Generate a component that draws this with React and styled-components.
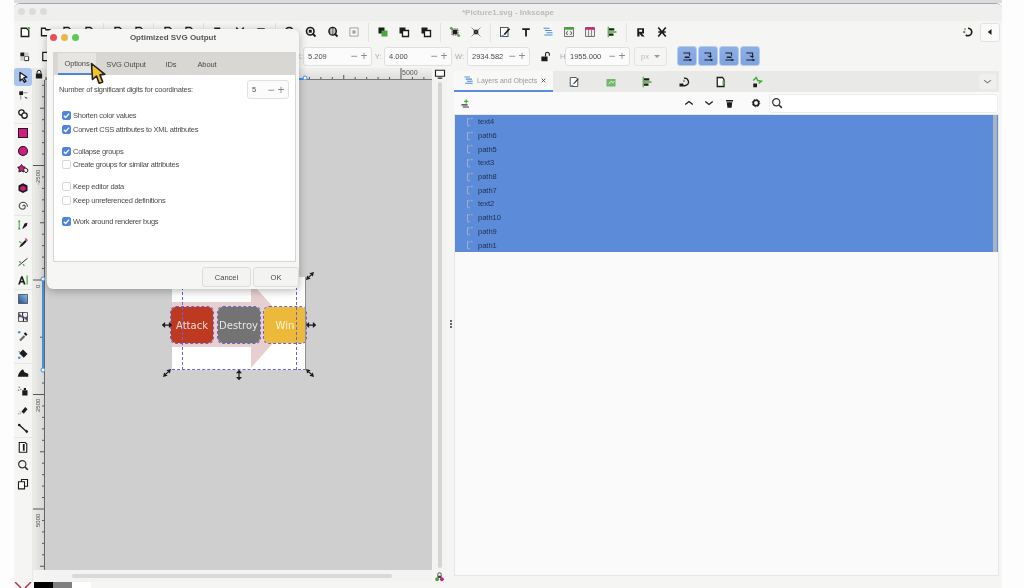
import React from 'react';
import styled, { createGlobalStyle } from 'styled-components';

const GlobalStyle = createGlobalStyle`
	html, body { margin: 0; padding: 0; background: #fdfdfd; overflow: hidden; }
	body { font-family: "Liberation Sans", Arial, sans-serif; color: #444; }
	* { box-sizing: border-box; }
`;

const K = '#1c1c1c';
const G = '#4aa83c';
const M = '#d21c80';
const B = '#4a90d9';

const ICONS = {
	doc: <path d="M4 2h6l3 3v9H4z" fill="#fff" stroke={K} strokeWidth="1.8" />,
	newdoc: <><path d="M3 3h7l3 3v8H3z" fill="#fff" stroke={K} strokeWidth="1.8" /><circle cx="13" cy="3" r="1.8" fill={G} /></>,
	folder: <path d="M2 3h5l1 2h6v8H2z" fill="#fff" stroke={K} strokeWidth="1.8" />,
	copy: <><path d="M3 2h8v9H3z" fill={K} /><path d="M6 6h8v8H6z" fill="#fff" stroke={K} strokeWidth="1.6" /></>,
	cut: <path d="M3 2l10 12M13 2L3 14" stroke={K} strokeWidth="2" />,
	paste: <><path d="M3 3h10v11H3z" fill={K} /><path d="M6 6h5v5H6z" fill="#ddd" /></>,
	zoom: <><circle cx="7" cy="7" r="5" fill="#fff" stroke={K} strokeWidth="2.2" /><path d="M10 10l4 4" stroke={K} strokeWidth="2.4" /></>,
	zoomSel: <><circle cx="7" cy="7" r="5" fill="none" stroke={K} strokeWidth="2.2" /><path d="M5 5h4v4H5z" fill={K} /><path d="M10 10l4 4" stroke={K} strokeWidth="2.4" /></>,
	zoomPage: <><circle cx="7.5" cy="7" r="5" fill="#888" stroke={K} strokeWidth="1.8" /><path d="M5.5 3v8M9.5 3v8" stroke="#fff" /><path d="M10 10l4 4" stroke={K} strokeWidth="2.4" /></>,
	fit: <><path d="M2.5 2.5h11v11h-11z" fill="none" stroke="#888" /><path d="M6 6h4v4H6z" fill="#999" /></>,
	raise: <><path d="M2 2h8v8H2z" fill={K} /><path d="M6 6h8v8H6z" fill={G} /></>,
	stack: <><path d="M2 2h8v8H2z" fill={K} /><path d="M6 6h8v8H6z" fill="#fff" stroke={K} strokeWidth="1.8" /></>,
	group: <><path d="M4 4h8v8H4z" fill="none" stroke={K} strokeWidth="1" strokeDasharray="2 1" /><path d="M5 5h6v6H5z" fill={K} /><circle cx="3" cy="3" r="1.8" fill={G} /><circle cx="13" cy="13" r="1.8" fill={G} /></>,
	ungroup: <><path d="M5 5h6v6H5z" fill={K} /><path d="M2 2l12 12M14 2L2 14" stroke="#666" /></>,
	edit: <><path d="M2 2h10v12H2z" fill="#fff" stroke="#555" strokeWidth="1.4" /><path d="M6 11l7-8 2 1-7 8z" fill={K} /><path d="M3 14l3-2" stroke={B} strokeWidth="1.6" /></>,
	text: <path d="M3 3h10v2.4H9.2V14H6.8V5.4H3z" fill={K} />,
	layers: <path d="M2 3h8M4 6h9M6 9h8M3 12h11" stroke={B} strokeWidth="1.6" fill="none" />,
	xml: <><path d="M2 2h12v12H2z" fill="#eee" stroke="#666" strokeWidth="1.2" /><path d="M2 2h12v3H2z" fill={G} /><path d="M6 7L4.5 9.5 6 12M10 7l1.5 2.5L10 12" stroke={K} fill="none" /></>,
	swatch: <><path d="M2 2h12v12H2z" fill="#eee" stroke="#666" strokeWidth="1.2" /><path d="M2 2h12v3H2z" fill={M} /><path d="M6 5v9M10 5v9" stroke="#666" /></>,
	align: <><path d="M3 1v14" stroke={G} strokeWidth="1.6" /><path d="M4 3h7v3H4zM4 10h6v3H4z" fill={K} /><path d="M4 7h10v2H4z" fill={G} /></>,
	prefs: <><path d="M3 3h9v7H9l4 4H9L6 10v4H3z" fill={K} /><path d="M5.5 5h4v2.6h-4z" fill="#fff" /></>,
	tools: <path d="M3 2l10 12M13 2L3 14M3 8h10" stroke={K} strokeWidth="2.2" />,
	spin: <><path d="M8 3a5 5 0 1 1-3 9" fill="none" stroke={K} strokeWidth="2.2" /><circle cx="3" cy="8" r="1.6" fill={G} /><circle cx="4" cy="4" r="1.2" fill="#888" /></>,
	back: <path d="M10 4v8L5 8z" fill={K} />,
	selDisp: <><path d="M2 2h6v6H2z" fill={K} /><path d="M8 8h6v6H8z" fill="#fff" stroke={K} strokeWidth="1.4" /><path d="M8 2h6v6H8zM2 8h6v6H2z" fill="#ccc" /></>,
	selector: <path d="M4 2l9 6-4 1.3 3 4.4-2 1.3-3-4.4L4 13z" fill="#fff" stroke={K} strokeWidth="1.8" strokeLinejoin="round" />,
	node: <><path d="M3 3h5v5H3z" fill={K} /><path d="M8 5h6M5 8v6" stroke="#777" /><path d="M10 10l4 2-2 1z" fill={K} /></>,
	tweak: <><circle cx="6" cy="6" r="3.6" fill="#fff" stroke={K} strokeWidth="1.8" /><circle cx="10" cy="10" r="3.6" fill="#fff" stroke={K} strokeWidth="1.8" /></>,
	rect: <path d="M2 2h12v12H2z" fill={M} stroke={K} strokeWidth="1.4" />,
	circle: <circle cx="8" cy="8" r="6" fill={M} stroke={K} strokeWidth="1.4" />,
	star: <><path d="M6 2l2 3 3 .5-2 2.8.4 3.7L6 10.6 2.6 12 3 8.3 1 5.5 4 5z" fill={M} stroke={K} strokeWidth="1.3" /><path d="M11 7l3 1 .6 3-2.6 2-2-1.6" fill="none" stroke={K} strokeWidth="1.3" /></>,
	cube: <><path d="M8 1.5l6 3v7l-6 3-6-3v-7z" fill={K} /><path d="M8 5l3.6 1.8v3.4L8 12l-3.6-1.8V6.8z" fill={M} /></>,
	spiral: <path d="M8 8.5a1.4 1.4 0 0 1 2-1.5 3 3 0 0 1-1 5 4.6 4.6 0 0 1-6-3.2A5.6 5.6 0 0 1 8 3a6 6 0 0 1 6 6" fill="none" stroke="#555" strokeWidth="1.6" />,
	bezier: <><path d="M3 3v9" stroke={G} strokeWidth="1.4" /><circle cx="3" cy="3" r="1.4" fill={G} /><circle cx="3" cy="13" r="1.4" fill={G} /><path d="M7 13l3-7 4-1-1 4-5 4z" fill={K} /></>,
	pencil: <><path d="M3 14l2-4 6-6 2 2-6 6z" fill={K} /><path d="M3 6l3 2" stroke={G} strokeWidth="1.6" /><path d="M11 2l3 3" stroke={M} strokeWidth="1.6" /></>,
	callig: <><path d="M2 13L14 3" stroke={K} strokeWidth="1.2" /><path d="M3 7l2 2M8 11l2 2" stroke={G} strokeWidth="1.6" /></>,
	textTool: <><path d="M1.5 14L5.5 3h2l4 11H9l-.8-2.6H4.8L4 14zM5.4 9.4h2.2L6.5 6z" fill={K} /><path d="M13.5 2v12" stroke={G} strokeWidth="1.6" /></>,
	grad: <><defs><linearGradient id="gr" x1="0" y1="1" x2="1" y2="0"><stop offset="0" stopColor="#1b4f8a" /><stop offset="1" stopColor="#8fc0ef" /></linearGradient></defs><path d="M2 2h12v12H2z" fill="url(#gr)" stroke="#555" strokeWidth="1.2" /></>,
	mesh: <><path d="M2 2h12v12H2z" fill="#eee" stroke="#555" strokeWidth="1.2" /><path d="M2 8c4-3 8 3 12 0M8 2c-3 4 3 8 0 12" stroke={K} strokeWidth="1.4" fill="none" /><path d="M2 2l6 6H2zM14 14L8 8h6z" fill="#557" /></>,
	dropper: <><path d="M3 13l6-6 2 2-6 6z" fill="#666" /><path d="M9 5l2-2 3 3-2 2z" fill={K} /><circle cx="3" cy="3" r="1.7" fill={B} /></>,
	bucket: <><path d="M8 2l6 6-5 5-6-6z" fill={K} /><circle cx="3" cy="13" r="1.8" fill={B} /><circle cx="3" cy="5" r="1" fill={B} /></>,
	paint: <path d="M1 13c1-5 4-9 7-10l2 4 5 2v4z" fill={K} />,
	spray: <><path d="M7 7h7v7H7z" fill={K} /><path d="M9 4h3v3H9z" fill={K} /><circle cx="3" cy="3" r="1" fill="#777" /><circle cx="5" cy="6" r="1" fill={G} /><circle cx="2" cy="7" r="1" fill="#777" /></>,
	eraser: <><path d="M6 10l5-6 3 3-5 6z" fill={K} /><path d="M1 13h4M3 9l3 3" stroke="#777" strokeDasharray="1.5 1" /></>,
	connector: <><path d="M3 4l10 9" stroke={K} strokeWidth="1.8" /><circle cx="3" cy="4" r="1.8" fill={K} /><path d="M13 10l2 3-2 2-2-2z" fill={K} /></>,
	pages: <><path d="M3 2h8l2 2v11H3z" fill="#fff" stroke={K} strokeWidth="1.5" /><path d="M9 4v9" stroke={K} strokeWidth="2.4" /></>,
	magnifier: <><circle cx="7" cy="7" r="4.8" fill="none" stroke="#333" strokeWidth="1.6" /><path d="M10.5 10.5l4 4" stroke="#333" strokeWidth="2" /></>,
	duplicate: <><path d="M6 2h8v9H6z" fill="#fff" stroke={K} strokeWidth="1.5" /><path d="M2 5h8v9.5H2z" fill="#fff" stroke={K} strokeWidth="1.5" /></>,
	fill: <><path d="M3 2h8l2 3v9H3z" fill="#fff" stroke="#555" strokeWidth="1.3" /><path d="M7 10l6-7 1.5 1L8 11z" fill="#333" /><path d="M3 14l4-2" stroke={B} strokeWidth="1.6" /></>,
	trace: <><path d="M2 4h12v10H2z" fill={G} opacity=".75" /><path d="M5 11l3-4 3 2 1-2" stroke="#fff" fill="none" /></>,
	hist: <><path d="M8 3a5 5 0 1 1-3 8" fill="none" stroke={K} strokeWidth="1.8" /><path d="M2 10h5v4H2z" fill={K} /><path d="M8 5v3" stroke={K} /></>,
	exportDoc: <><path d="M3 2h7l2 3v9H3z" fill="#fff" stroke={K} strokeWidth="1.7" /><path d="M10 6l4 3-4 3z" fill={G} /></>,
	liveFx: <><path d="M3 10h5v5H3z" fill={K} /><path d="M3 6l4-4 2 4 5 1-4 3" stroke={G} strokeWidth="2" fill="none" /></>,
	addLayer: <><path d="M2 10h9M4 13h9" stroke="#333" strokeWidth="1.5" /><path d="M9 2v6M6 5h6" stroke={G} strokeWidth="1.8" /></>,
	chevUp: <path d="M3 10l5-4 5 4" fill="none" stroke={K} strokeWidth="1.8" />,
	chevDown: <path d="M3 6l5 4 5-4" fill="none" stroke={K} strokeWidth="1.8" />,
	chevGrey: <path d="M3 6l5 4 5-4" fill="none" stroke="#777" strokeWidth="1.5" />,
	trash: <path d="M3 3h10v2H3zM4 6h8l-1 8H5z" fill={K} />,
	gear: <><circle cx="8" cy="8" r="4.4" fill="none" stroke={K} strokeWidth="2.6" /><circle cx="8" cy="8" r="6" fill="none" stroke={K} strokeWidth="1.6" strokeDasharray="2 2.7" /></>,
	lockClosed: <><path d="M5 7V5a3 3 0 0 1 6 0v2" fill="none" stroke={K} strokeWidth="1.6" /><path d="M3 7h10v8H3z" fill={K} /></>,
	lockOpen: <><path d="M8 8V4.6a2.8 2.8 0 0 1 5.6 0V7" fill="none" stroke={K} strokeWidth="1.6" /><path d="M2 8h9v7H2z" fill={K} /></>,
	monitor: <><path d="M2 3h12v8H2z" fill="#fff" stroke={K} strokeWidth="1.5" /><path d="M5 13.5h6" stroke={K} strokeWidth="1.5" /></>,
	colorLock: <><path d="M5.5 7V5a2.5 2.5 0 0 1 5 0v2" fill="none" stroke="#444" strokeWidth="1.4" /><path d="M5 7h6v3H5z" fill="#444" /><circle cx="4.5" cy="12" r="2.8" fill={G} /><circle cx="11.5" cy="12" r="2.8" fill={M} /></>,
	closeTab: <path d="M4 4l8 8M12 4l-8 8" stroke="#444" strokeWidth="2" />,
	row: <><path d="M4 2v12M4 3h4M4 14h4" stroke="#aab4c4" strokeWidth="1.4" fill="none" /><circle cx="11" cy="2.5" r="1.3" fill="#aab4c4" /></>,
};

const Glyph = ({ name, size = 12 }) => (
	<svg width={size} height={size} viewBox="0 0 16 16">{ICONS[name]}</svg>
);

const SnapGlyph = ({ variant }) => (
	<svg width="11" height="11" viewBox="0 0 16 16">
		<path d="M2 3h9v4M2 13h12" fill="none" stroke={K} strokeWidth="1.5" />
		<path d={variant % 2 ? 'M6 7h7l-2 3z' : 'M4 8h7v2H4z'} fill={K} />
		<path d="M11 11l3 2-3 2z" fill={K} />
	</svg>
);

const Stage = styled.div`
	position: relative;
	width: 1024px;
	height: 588px;
	overflow: hidden;
	background: #fdfdfd;
	filter: blur(0.45px);
`;

const TopStrip = styled.div`
	margin-left: 14px;
	width: 988px;
	height: 3px;
	background: #dcdcdc;
`;

const Window = styled.div`
	margin-left: 14px;
	width: 988px;
	height: 585px;
	background: #f5f5f3;
	border-top: 1px solid #a4a4b4;
	border-radius: 6px 6px 0 0;
	display: flex;
	flex-direction: column;
	overflow: hidden;
`;

const TitleBar = styled.div`
	position: relative;
	height: 17px;
	flex: none;
	background: #efefed;
	display: flex;
	align-items: center;
	justify-content: center;
	font-size: 8px;
	font-weight: 700;
	color: #bcbcbc;
`;

const Lights = styled.div`
	position: absolute;
	left: ${({ $left }) => $left}px;
	top: ${({ $top }) => $top}px;
	display: flex;
	gap: ${({ $gap }) => $gap}px;
`;

const Light = styled.span`
	width: 7px;
	height: 7px;
	border-radius: 50%;
	background: ${({ $color }) => $color};
`;

const CommandBar = styled.div`
	height: 22px;
	flex: none;
	display: flex;
	align-items: center;
`;

const Slot = styled.div`
	width: 21.3px;
	height: 20px;
	flex: none;
	display: flex;
	align-items: center;
	justify-content: center;
`;

const BarSep = styled.div`
	width: 1px;
	height: 19px;
	flex: none;
	margin: 0 3.4px;
	background: #e4e4e2;
`;

const BarRight = styled.div`
	margin-left: auto;
	margin-right: 2px;
	display: flex;
	align-items: center;
	gap: 1px;
`;

const SquareBtn = styled.div`
	width: 20px;
	height: 19px;
	display: flex;
	align-items: center;
	justify-content: center;
	background: #fafafa;
	border: 1px solid #e2e2e0;
	border-radius: 3px;
`;

const ControlBar = styled.div`
	height: 24px;
	flex: none;
	padding-top: 2px;
	display: flex;
	align-items: center;
`;

const ControlLeft = styled.div`
	width: 282px;
	flex: none;
	display: flex;
`;

const FieldLabel = styled.span`
	font-size: 7.5px;
	color: #aaa;
	width: ${({ $w }) => $w}px;
	flex: none;
	text-align: center;
`;

const Field = styled.div`
	width: ${({ $w }) => $w}px;
	height: 19px;
	flex: none;
	display: flex;
	align-items: center;
	padding: 0 2px 0 4px;
	background: #fbfbfb;
	border: 1px solid #e0e0de;
	border-radius: 3px;
	font-size: 7.5px;
	color: #4a4a4a;
`;

const FieldValue = styled.span`
	flex: 1;
`;

const SpinSign = styled.span`
	width: 10px;
	text-align: center;
	font-size: 12px;
	line-height: 12px;
	color: #8b8b8b;
`;

const UnitSelect = styled.div`
	width: 33px;
	height: 19px;
	flex: none;
	margin-left: 4px;
	display: flex;
	align-items: center;
	justify-content: space-between;
	padding: 0 6px;
	border: 1px solid #e4e4e2;
	border-radius: 3px;
	font-size: 7.5px;
	color: #bbb;

	&::after {
		content: '';
		border-left: 3px solid transparent;
		border-right: 3px solid transparent;
		border-top: 3px solid #999;
	}
`;

const LockSlot = styled.div`
	width: 30px;
	flex: none;
	display: flex;
	justify-content: center;
`;

const SnapGroup = styled.div`
	margin-left: 10px;
	display: flex;
	gap: 1px;
`;

const SnapBtn = styled.div`
	width: 20px;
	height: 20px;
	display: flex;
	align-items: center;
	justify-content: center;
	background: linear-gradient(#8cafe6, #7fa3de);
	border: 1px solid #b9cdea;
	border-radius: 3px;
`;

const Main = styled.div`
	flex: 1;
	min-height: 0;
	display: flex;
	margin-top: 1px;
`;

const ToolBox = styled.div`
	width: 19px;
	flex: none;
	display: flex;
	flex-direction: column;
	align-items: center;
	border-right: 1px solid #e8e8e6;
`;

const ToolBtn = styled.div`
	width: 18px;
	height: 18.25px;
	flex: none;
	display: flex;
	align-items: center;
	justify-content: center;
	border-radius: 3px;
	background: ${({ $active }) => ($active ? '#a9c4ee' : 'transparent')};
`;

const ToolSep = styled.div`
	width: 19px;
	height: 1px;
	flex: none;
	background: #e6e6e4;
`;

const CanvasArea = styled.div`
	width: 414px;
	flex: none;
	display: grid;
	grid-template-columns: 12px 387px 15px;
	grid-template-rows: 12px 490px 12px;
`;

const Corner = styled.div`
	display: flex;
	align-items: center;
	justify-content: center;
	background: #e9e9e7;
`;

const CornerPlain = styled(Corner)`
	background: #f5f5f3;
`;

const RulerH = styled.div`
	background: linear-gradient(#f0f0ee, #dcdcda);
`;

const RulerV = styled.div`
	background: linear-gradient(90deg, #ecece9, #d6d6d4);
`;

const RulerSvg = styled.svg`
	display: block;
`;

const Canvas = styled.div`
	position: relative;
	overflow: hidden;
	background: #cfcfcf;
`;

const VScroll = styled.div`
	display: flex;
	justify-content: center;
	padding: 0 0 2px;
	background: #f3f3f1;
`;

const VTrough = styled.div`
	width: 4px;
	margin-top: 2px;
	background: #d5d5d3;
	border-radius: 2px;
`;

const HScroll = styled.div`
	display: flex;
	align-items: center;
	padding: 0 40px 0 27px;
	background: #f3f3f1;
`;

const HTrough = styled.div`
	flex: 1;
	height: 4px;
	background: #d9d9d7;
	border-radius: 2px;
`;

const Page = styled.div`
	position: absolute;
	left: 127px;
	top: 197px;
	width: 134px;
	height: 93px;
	background: #fff;
`;

const ArrowSvg = styled.svg`
	position: absolute;
	left: 0;
	top: 0;
`;

const PageRow = styled.div`
	position: absolute;
	left: -1px;
	top: 30px;
	display: flex;
	gap: 4.5px;
`;

const Block = styled.div`
	width: 42px;
	height: 36px;
	display: flex;
	align-items: center;
	justify-content: center;
	border-radius: 5px;
	background: ${({ $color }) => $color};
	outline: 1px dashed #6a64cc;
	font-family: "DejaVu Sans", sans-serif;
	font-size: 10px;
	color: ${({ $ink }) => $ink};
`;

const Guide = styled.div`
	position: absolute;
	left: ${({ $x }) => $x}px;
	top: 0;
	height: 100%;
	border-left: 1px dashed #6a64cc;
`;

const BottomLine = styled.div`
	position: absolute;
	left: 0;
	right: 0;
	bottom: 0;
	border-bottom: 1px dashed #6a64cc;
`;

const EdgeLine = styled.div`
	position: absolute;
	right: 0;
	top: 0;
	height: 100%;
	border-right: 1px solid #8e8e8e;
`;

const Handle = styled.svg`
	position: absolute;
	left: ${({ $x }) => $x}px;
	top: ${({ $y }) => $y}px;
`;

const Gutter = styled.div`
	width: 7px;
	flex: none;
	display: flex;
	flex-direction: column;
	align-items: center;
	justify-content: center;
	gap: 1px;
	padding-bottom: 2px;
`;

const GripDot = styled.span`
	width: 2px;
	height: 2px;
	background: #333;
	border-radius: 50%;
`;

const Panel = styled.div`
	width: 545px;
	flex: none;
	margin: 3px 0 6px;
	display: flex;
	flex-direction: column;
`;

const PanelTabs = styled.div`
	height: 21px;
	flex: none;
	display: flex;
	align-items: stretch;
	background: #e9e9e7;
`;

const PanelTab = styled.div`
	width: 99px;
	flex: none;
	display: flex;
	align-items: center;
	gap: 3px;
	padding-left: 9px;
	background: #f8f8f7;
	border-bottom: 2px solid #5a8bdc;
	font-size: 7px;
	color: #999;
`;

const TabIcon = styled.div`
	width: 36.6px;
	flex: none;
	display: flex;
	align-items: center;
	justify-content: center;
`;

const FirstTabIcon = styled(TabIcon)`
	margin-left: 3px;
`;

const TabChevron = styled.div`
	margin: 3px 3px 3px auto;
	width: 17px;
	display: flex;
	align-items: center;
	justify-content: center;
	background: #efefed;
	border-radius: 3px;
`;

const PanelTools = styled.div`
	height: 22px;
	flex: none;
	display: flex;
	align-items: center;
	padding-left: 1px;
	background: #fafafa;
`;

const PanelToolBtn = styled.div`
	width: 20.5px;
	flex: none;
	display: flex;
	justify-content: center;
	margin-left: ${({ $gap }) => $gap || 0}px;
`;

const SearchBox = styled.div`
	width: 229px;
	height: 19px;
	flex: none;
	margin-left: 3px;
	padding-left: 1px;
	display: flex;
	align-items: center;
	background: #fff;
	border: 1px solid #ececea;
	border-radius: 3px;
`;

const PanelBody = styled.div`
	flex: 1;
	min-height: 0;
	background: #fafafa;
	border: 1px solid #e6e6e4;
	border-top: 0;
`;

const LayerList = styled.div`
	position: relative;
	background: #5b8bd9;
	border-top: 1px solid #e8e8e8;
`;

const LayerScroll = styled.div`
	position: absolute;
	right: 1px;
	top: 0;
	bottom: 0;
	width: 4px;
	background: #a9b3c2;
`;

const LayerRow = styled.div`
	height: 13.7px;
	display: flex;
	align-items: center;
	gap: 3px;
	padding-left: 10px;
	font-size: 7.5px;
	color: #24324f;
`;

const Palette = styled.div`
	height: 6px;
	flex: none;
	display: flex;
`;

const NoColor = styled.div`
	width: 20px;
	display: flex;
	overflow: hidden;
	background: #f5f5f3;
`;

const PaletteSwatch = styled.div`
	width: 19px;
	flex: none;
	background: ${({ $color }) => $color};
`;

const Dialog = styled.div`
	position: absolute;
	left: 47px;
	top: 29px;
	width: 252px;
	height: 260px;
	display: flex;
	flex-direction: column;
	background: #f6f6f5;
	border-radius: 6px;
	box-shadow: 0 2px 9px rgba(0, 0, 0, 0.28);
`;

const DialogTitle = styled.div`
	height: 17px;
	margin-bottom: 4px;
	flex: none;
	display: flex;
	align-items: center;
	justify-content: center;
	font-size: 8px;
	font-weight: 700;
	color: #555;
`;

const Notebook = styled.div`
	flex: none;
	margin: 2px 3px 0 6px;
	height: 210px;
	display: flex;
	flex-direction: column;
	border: 1px solid #d6d6d4;
`;

const NoteTabs = styled.div`
	height: 22px;
	flex: none;
	display: flex;
	padding-left: 4px;
	background: #d8d7d3;
`;

const NoteTab = styled.div`
	width: ${({ $w }) => $w}px;
	flex: none;
	display: flex;
	align-items: center;
	justify-content: center;
	font-size: 7.5px;
	letter-spacing: -0.1px;
	color: #4a4a4a;
	${({ $active }) => $active && 'background: #e6e5e2; border-bottom: 2px solid #4f83dc;'}
`;

const NoteBody = styled.div`
	flex: 1;
	background: #fff;
	padding: 5px 6px 0 5px;
`;

const DigitsRow = styled.div`
	display: flex;
	align-items: center;
	justify-content: space-between;
	font-size: 7.5px;
	letter-spacing: -0.22px;
	color: #4a4a4a;
	margin-bottom: 10px;
`;

const DigitsField = styled(Field)`
	width: 42px;
	font-size: 7.5px;
`;

const OptionGroup = styled.div`
	margin-bottom: 8px;
`;

const OptionRow = styled.div`
	height: 13.7px;
	display: flex;
	align-items: center;
	gap: 2px;
	padding-left: 3px;
	font-size: 7.5px;
	letter-spacing: -0.25px;
	color: #4a4a4a;
`;

const Check = styled.span`
	width: 9px;
	height: 9px;
	flex: none;
	display: flex;
	border-radius: 2px;
	background: ${({ $on }) => ($on ? '#4f83dc' : '#fff')};
	border: 1px solid ${({ $on }) => ($on ? '#4f83dc' : '#d8d8d8')};
`;

const DialogActions = styled.div`
	margin-top: 5px;
	display: flex;
	justify-content: flex-end;
	gap: 2px;
`;

const DialogBtn = styled.button`
	width: ${({ $w }) => $w}px;
	height: 20px;
	padding: 0;
	font: 7.5px "Liberation Sans", Arial, sans-serif;
	color: #4a4a4a;
	background: #f3f3f1;
	border: 1px solid #dcdcda;
	border-radius: 3px;
`;

const Cursor = styled.svg`
	position: absolute;
	left: 90px;
	top: 62px;
`;

const COMMAND_GROUPS = [
	['newdoc', 'folder', 'doc', 'doc'],
	['doc', 'doc'],
	['doc', 'doc'],
	['copy', 'cut', 'paste'],
	['zoom', 'zoomSel', 'zoomPage', 'fit'],
	['raise', 'stack', 'stack'],
	['group', 'ungroup'],
	['edit', 'text', 'layers', 'xml', 'swatch', 'align'],
	['prefs', 'tools'],
];

const TOOLS = [
	[['selector', true], ['node'], ['tweak']],
	[['rect'], ['circle'], ['star'], ['cube'], ['spiral']],
	[['bezier'], ['pencil'], ['callig'], ['textTool']],
	[['grad'], ['mesh'], ['dropper'], ['bucket']],
	[['paint'], ['spray'], ['eraser'], ['connector']],
	[['pages'], ['magnifier'], ['duplicate']],
];

const OPTION_GROUPS = [
	[['Shorten color values', true], ['Convert CSS attributes to XML attributes', true]],
	[['Collapse groups', true], ['Create groups for similar attributes', false]],
	[['Keep editor data', false], ['Keep unreferenced definitions', false]],
	[['Work around renderer bugs', true]],
];

const LAYERS = ['text4', 'path6', 'path5', 'text3', 'path8', 'path7', 'text2', 'path10', 'path9', 'path1'];

const TickMarks = ({ horizontal, length, origin }) => {
	const marks = [];
	for (let n = -20; n < 40; n++) {
		const p = origin + n * 11.45;
		if (p < 0 || p > length) continue;
		const major = n % 10 === 0;
		const size = major ? 12 : n % 5 === 0 ? 5 : 3;
		marks.push(horizontal
			? <line key={n} x1={p} x2={p} y1={12 - size} y2={12} stroke="#555" />
			: <line key={n} y1={p} y2={p} x1={12 - size} x2={12} stroke="#555" />);
	}
	return marks;
};

const RulerLabelV = ({ y, children }) => (
	<text x="7" y={y} transform={`rotate(-90 7 ${y})`} fontSize="6" fontFamily="Liberation Sans" fill="#555">{children}</text>
);

const Checkmark = () => (
	<svg width="7" height="7" viewBox="0 0 8 8"><path d="M1 4.2l2 2 4-4.4" fill="none" stroke="#fff" strokeWidth="1.5" /></svg>
);

const H_ARROW = 'M1 8h14M1 8l3-2.6v5.2zM15 8l-3-2.6v5.2z';
const V_ARROW = 'M8 1v14M8 1L5.4 4h5.2zM8 15l-2.6-3h5.2z';
const NE_ARROW = 'M3 13L13 3M3 13l1-4 3 3zM13 3l-4 1 3 3z';
const SE_ARROW = 'M3 3l10 10M3 3l1 4 3-3zM13 13l-4-1 3-3z';

const ARROWS = [
	[117, 240, H_ARROW],
	[261, 240, H_ARROW],
	[189, 290, V_ARROW],
	[117, 288, NE_ARROW],
	[260, 288, SE_ARROW],
	[260, 191, NE_ARROW],
];

export default function App() {
	return (
		<Stage>
			<GlobalStyle />
			<TopStrip />
			<Window>
				<TitleBar>
					<Lights $left={4} $top={4} $gap={4}>
						<Light $color="#dcdcda" />
						<Light $color="#dcdcda" />
						<Light $color="#dcdcda" />
					</Lights>
					*Picture1.svg - Inkscape
				</TitleBar>

				<CommandBar>
					{COMMAND_GROUPS.map((group, i) => (
						<React.Fragment key={i}>
							{i > 0 && <BarSep />}
							{group.map((name, j) => <Slot key={j}><Glyph name={name} /></Slot>)}
						</React.Fragment>
					))}
					<BarRight>
						<Slot><Glyph name="spin" /></Slot>
						<SquareBtn><Glyph name="back" /></SquareBtn>
					</BarRight>
				</CommandBar>

				<ControlBar>
					<ControlLeft>
						<Slot><Glyph name="selDisp" size={11} /></Slot>
						<Slot><Glyph name="doc" size={11} /></Slot>
					</ControlLeft>
					<FieldLabel $w={7}>X:</FieldLabel>
					<Field $w={69}><FieldValue>5.209</FieldValue><SpinSign>−</SpinSign><SpinSign>+</SpinSign></Field>
					<FieldLabel $w={12}>Y:</FieldLabel>
					<Field $w={68}><FieldValue>4.000</FieldValue><SpinSign>−</SpinSign><SpinSign>+</SpinSign></Field>
					<FieldLabel $w={15}>W:</FieldLabel>
					<Field $w={63}><FieldValue>2934.582</FieldValue><SpinSign>−</SpinSign><SpinSign>+</SpinSign></Field>
					<LockSlot><Glyph name="lockOpen" size={11} /></LockSlot>
					<FieldLabel $w={5}>H:</FieldLabel>
					<Field $w={65}><FieldValue>1955.000</FieldValue><SpinSign>−</SpinSign><SpinSign>+</SpinSign></Field>
					<UnitSelect>px</UnitSelect>
					<SnapGroup>
						{[0, 1, 2, 3].map(v => <SnapBtn key={v}><SnapGlyph variant={v} /></SnapBtn>)}
					</SnapGroup>
				</ControlBar>

				<Main>
					<ToolBox>
						{TOOLS.map((group, i) => (
							<React.Fragment key={i}>
								{i > 0 && <ToolSep />}
								{group.map(([name, active]) => (
									<ToolBtn key={name} $active={active}><Glyph name={name} /></ToolBtn>
								))}
							</React.Fragment>
						))}
					</ToolBox>

					<CanvasArea>
						<Corner><Glyph name="lockClosed" size={10} /></Corner>
						<RulerH>
							<RulerSvg width="387" height="12">
								<TickMarks horizontal length={387} origin={127} />
								<line x1="0" x2="387" y1="11.5" y2="11.5" stroke="#777" />
								<line x1="254" x2="261" y1="11" y2="11" stroke={B} strokeWidth="2" />
								<circle cx="260" cy="10" r="2" fill="#fff" stroke={B} />
								<text x="357" y="7" fontSize="7" fontFamily="Liberation Sans" fill="#555">5000</text>
							</RulerSvg>
						</RulerH>
						<CornerPlain><Glyph name="monitor" size={12} /></CornerPlain>

						<RulerV>
							<RulerSvg width="12" height="490">
								<TickMarks length={490} origin={200} />
								<line x1="11.5" x2="11.5" y1="0" y2="490" stroke="#666" />
								<line x1="10" x2="10" y1="198" y2="290" stroke={B} strokeWidth="2" />
								<circle cx="10" cy="199" r="2" fill="#fff" stroke={B} />
								<circle cx="10" cy="290" r="2" fill="#fff" stroke={B} />
								<RulerLabelV y={105}>-2500</RulerLabelV>
								<RulerLabelV y={208}>0</RulerLabelV>
								<RulerLabelV y={332}>2500</RulerLabelV>
								<RulerLabelV y={447}>5000</RulerLabelV>
							</RulerSvg>
						</RulerV>
						<Canvas>
							<Page>
								<ArrowSvg width="134" height="93">
									<path d="M0 25h79V5l38 43-38 43V70H0z" fill="#e8cfcf" />
								</ArrowSvg>
								<PageRow>
									<Block $color="#bd3a20" $ink="#f4dcd6">Attack</Block>
									<Block $color="#737373" $ink="#e6e6e6">Destroy</Block>
									<Block $color="#ecb93a" $ink="#fff6dc">Win</Block>
								</PageRow>
								<Guide $x={10} />
								<Guide $x={124} />
								<BottomLine />
								<EdgeLine />
							</Page>
							{ARROWS.map(([x, y, d], i) => (
								<Handle key={i} $x={x} $y={y} width="10" height="10" viewBox="0 0 16 16">
									<path d={d} fill={K} stroke={K} strokeWidth="2" />
								</Handle>
							))}
						</Canvas>
						<VScroll><VTrough /></VScroll>

						<CornerPlain />
						<HScroll><HTrough /></HScroll>
						<CornerPlain><Glyph name="colorLock" size={11} /></CornerPlain>
					</CanvasArea>

					<Gutter>
						<GripDot /><GripDot /><GripDot />
					</Gutter>

					<Panel>
						<PanelTabs>
							<PanelTab>
								<Glyph name="layers" size={11} />
								Layers and Objects
								<Glyph name="closeTab" size={7} />
							</PanelTab>
							<FirstTabIcon><Glyph name="fill" /></FirstTabIcon>
							<TabIcon><Glyph name="trace" /></TabIcon>
							<TabIcon><Glyph name="align" /></TabIcon>
							<TabIcon><Glyph name="hist" /></TabIcon>
							<TabIcon><Glyph name="exportDoc" /></TabIcon>
							<TabIcon><Glyph name="liveFx" /></TabIcon>
							<TabChevron><Glyph name="chevGrey" size={11} /></TabChevron>
						</PanelTabs>
						<PanelTools>
							<PanelToolBtn><Glyph name="addLayer" size={11} /></PanelToolBtn>
							<PanelToolBtn $gap={203}><Glyph name="chevUp" /></PanelToolBtn>
							<PanelToolBtn><Glyph name="chevDown" /></PanelToolBtn>
							<PanelToolBtn><Glyph name="trash" size={11} /></PanelToolBtn>
							<PanelToolBtn $gap={5.75}><Glyph name="gear" size={10} /></PanelToolBtn>
							<SearchBox><Glyph name="magnifier" /></SearchBox>
						</PanelTools>
						<PanelBody>
							<LayerList>
								<LayerScroll />
								{LAYERS.map(name => (
									<LayerRow key={name}><Glyph name="row" size={10} />{name}</LayerRow>
								))}
							</LayerList>
						</PanelBody>
					</Panel>
				</Main>

				<Palette>
					<NoColor>
						<svg width="20" height="6"><path d="M1 0l6 6M17 0l-6 6" stroke="#b02a45" strokeWidth="1.4" /></svg>
					</NoColor>
					<PaletteSwatch $color="#000" />
					<PaletteSwatch $color="#7f7f7f" />
					<PaletteSwatch $color="#fff" />
				</Palette>
			</Window>

			<Dialog>
				<Lights $left={3} $top={5} $gap={4}>
					<Light $color="#e8505a" />
					<Light $color="#e8b84a" />
					<Light $color="#5bc85a" />
				</Lights>
				<DialogTitle>Optimized SVG Output</DialogTitle>
				<Notebook>
					<NoteTabs>
						<NoteTab $w={38} $active>Options</NoteTab>
						<NoteTab $w={60}>SVG Output</NoteTab>
						<NoteTab $w={30}>IDs</NoteTab>
						<NoteTab $w={42}>About</NoteTab>
					</NoteTabs>
					<NoteBody>
						<DigitsRow>
							Number of significant digits for coordinates:
							<DigitsField>
								<FieldValue>5</FieldValue><SpinSign>−</SpinSign><SpinSign>+</SpinSign>
							</DigitsField>
						</DigitsRow>
						{OPTION_GROUPS.map((group, i) => (
							<OptionGroup key={i}>
								{group.map(([label, on]) => (
									<OptionRow key={label}>
										<Check $on={on}>{on && <Checkmark />}</Check>
										{label}
									</OptionRow>
								))}
							</OptionGroup>
						))}
					</NoteBody>
				</Notebook>
				<DialogActions>
					<DialogBtn $w={49}>Cancel</DialogBtn>
					<DialogBtn $w={46}>OK</DialogBtn>
				</DialogActions>
			</Dialog>

			<Cursor width="16" height="24" viewBox="0 0 16 24">
				<path d="M1.5 1.5l1 16 4-3.4 2.6 7.2 3.6-1.4-2.8-7 5-.6z" fill="#f4c430" stroke="#222" strokeWidth="1.6" strokeLinejoin="round" />
			</Cursor>
		</Stage>
	);
}
